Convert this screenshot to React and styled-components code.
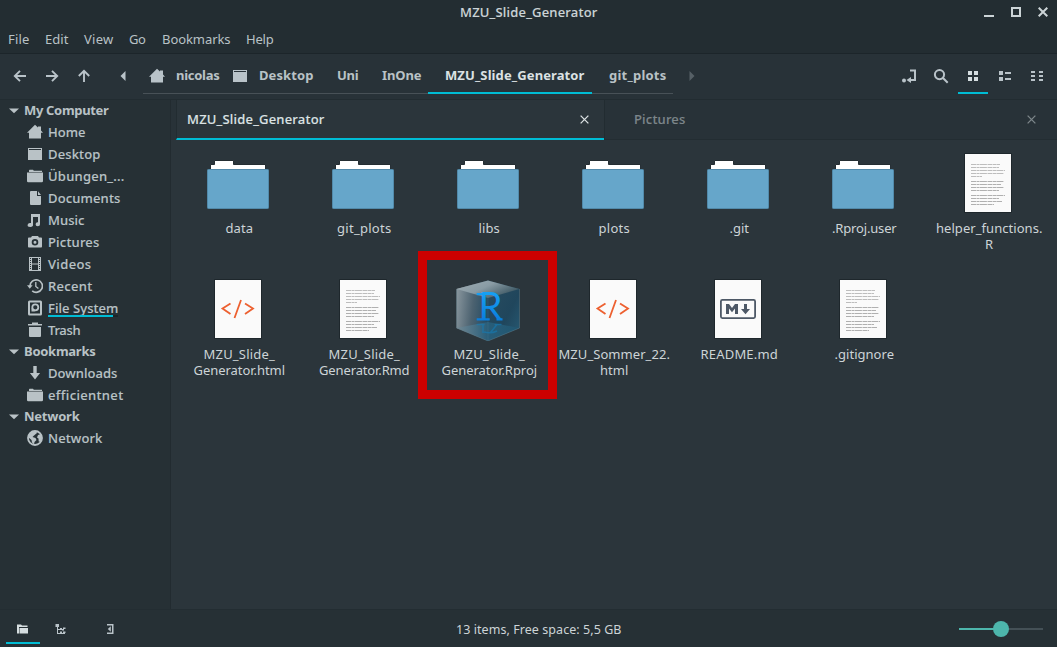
import React, { useLayoutEffect, useRef } from "react";
import styled, { createGlobalStyle } from "styled-components";

const c = {
  title: "#232d32",
  bar: "#283238",
  side: "#263035",
  view: "#2b353b",
  text: "#b9c2c6",
  bright: "#dce2e4",
  dim: "#7d868a",
  icon: "#b9c3c9",
  accent: "#00bcd4",
};

const Global = createGlobalStyle`
  *, *::before, *::after { box-sizing: border-box; }
  body { margin: 0; background: ${c.view}; font-family: "Noto Sans", "Open Sans", sans-serif; font-size: 13px; color: ${c.text}; overflow: hidden; }
  svg { display: block; flex: none; }
`;

const TextBox = styled.span`
  display: block;
  flex: none;
  width: ${(p) => p.$w}px;
  white-space: nowrap;
  font-size: ${(p) => p.$size || 13}px;
  font-weight: ${(p) => p.$weight || 400};
  -webkit-text-stroke: ${(p) => (p.$weight === 500 ? 0.12 : 0)}px currentColor;
  line-height: 16px;
`;

/* Tracks a label evenly so that it takes the given width. */
function Label({ w, size, weight, children }) {
  const ref = useRef(null);
  useLayoutEffect(() => {
    const el = ref.current;
    el.style.letterSpacing = "0px";
    const natural = el.getBoundingClientRect().width;
    el.style.letterSpacing = (w + 0.5 - natural) / Math.max(1, children.length) + "px";
  }, [w, children]);
  return (
    <TextBox $w={w} $size={size} $weight={weight}>
      <span ref={ref}>{children}</span>
    </TextBox>
  );
}

const Window = styled.div`
  width: 1057px;
  height: 647px;
  display: flex;
  flex-direction: column;
  background: ${c.view};
`;

const TitleBar = styled.header`
  height: 25px;
  padding-bottom: 1px;
  background: ${c.title};
  display: grid;
  grid-template-columns: 1fr auto 1fr;
  align-items: center;
  color: #ccd4d7;
`;
const WindowButtons = styled.div`
  display: flex;
  justify-content: flex-end;
  gap: 17px;
  padding-right: 9px;
`;

const MenuBar = styled.nav`
  height: 29px;
  background: ${c.title};
  border-bottom: 1px solid #1c252a;
  display: flex;
  align-items: center;
  padding-left: 8px;
`;
const MenuItem = styled.div`
  width: ${(p) => p.$cell}px;
`;

const Toolbar = styled.div`
  height: 46px;
  background: ${c.bar};
  border-bottom: 1px solid #222c31;
  display: flex;
  align-items: flex-start;
  padding-left: 12px;
  padding-right: 5px;
`;
const ToolButton = styled.div`
  width: ${(p) => p.$w}px;
  height: 40px;
  padding-top: 5px;
  display: flex;
  align-items: center;
  justify-content: center;
  border-bottom: 2px solid ${(p) => (p.$active ? c.accent : "transparent")};
  color: ${(p) => (p.$active ? "#d5dde0" : p.$faded ? "#566066" : c.icon)};
`;
const ScrollBack = styled(ToolButton)`
  justify-content: flex-start;
  padding-left: 23px;
`;
const Path = styled.div`
  display: flex;
`;
const Crumb = styled.div`
  width: ${(p) => p.$cell}px;
  height: 40px;
  padding: 4px 0 ${(p) => (p.$active ? 0 : 1)}px ${(p) => p.$pad}px;
  display: flex;
  align-items: center;
  border-bottom: ${(p) => (p.$active ? `2px solid ${c.accent}` : "1px solid #485157")};
  color: ${(p) => (p.$active ? c.bright : c.text)};
`;
const IconSlot = styled.span`
  width: ${(p) => p.$w}px;
  padding-top: 1px;
  color: ${c.icon};
`;
const Spacer = styled.div`
  flex: 1;
`;
const ViewButtons = styled.div`
  display: flex;
  gap: 2px;
`;

const Main = styled.div`
  height: 509px;
  display: flex;
`;
const Sidebar = styled.aside`
  width: 171px;
  background: ${c.side};
  border-right: 1px solid #222b30;
`;
const Heading = styled.div`
  height: 21px;
  display: flex;
  align-items: center;
  padding: 0 0 1px 9px;
  gap: 5px;
`;
const Place = styled.div`
  height: 22px;
  display: flex;
  align-items: center;
  padding-left: 27px;
  gap: 5px;
  color: ${c.text};
`;
const PlaceText = styled.div`
  position: relative;
`;
const Usage = styled.div`
  position: absolute;
  left: 0;
  right: 0;
  bottom: -1px;
  height: 2px;
  background: linear-gradient(to right, ${c.accent} 93%, #1c2529 93%);
`;

const Content = styled.main`
  flex: 1;
  background: ${c.view};
`;
const Tabs = styled.div`
  height: 40px;
  display: flex;
  background: ${c.bar};
  padding-left: 5px;
`;
const Tab = styled.div`
  width: ${(p) => p.$cell}px;
  display: flex;
  align-items: center;
  justify-content: space-between;
  padding: ${(p) => (p.$active ? "0 15px 0 10px" : "0 21px 1px 29px")};
  background: ${(p) => (p.$active ? c.view : c.bar)};
  border-left: 1px solid #222c31;
  border-bottom: ${(p) => (p.$active ? `2px solid ${c.accent}` : "1px solid #232d32")};
  color: ${(p) => (p.$active ? c.bright : c.dim)};
`;

const Files = styled.div`
  display: grid;
  grid-template-columns: repeat(7, 125px);
  grid-auto-rows: 126px;
  padding: 11px 0 0 5px;
`;
const File = styled.div`
  position: relative;
  display: flex;
  flex-direction: column;
  align-items: center;
`;
const FileIcon = styled.div`
  width: 64px;
  height: 64px;
  margin-bottom: 5px;
  margin-right: 1px;
`;
const FileName = styled.div`
  display: flex;
  flex-direction: column;
  align-items: center;
  padding-left: 1px;
  color: #cdd4d7;
`;
const Marker = styled.div`
  position: absolute;
  left: -8px;
  top: -26px;
  width: 139px;
  height: 148px;
  border: 9px solid #cc0000;
`;

const StatusBar = styled.footer`
  height: 38px;
  background: ${c.side};
  border-top: 1px solid #232d32;
  display: grid;
  grid-template-columns: 456px 1fr auto;
  align-items: center;
  color: #cdd4d7;
`;
const StatusText = styled.div`
  padding-top: 2px;
`;
const PaneButtons = styled.div`
  display: flex;
  align-self: start;
  padding-left: 6px;
`;
const PaneButton = styled.div`
  width: ${(p) => p.$w}px;
  margin-right: ${(p) => p.$gap}px;
  height: 34px;
  padding-top: 5px;
  display: flex;
  justify-content: center;
  align-items: center;
  color: ${(p) => (p.$active ? "#d5dde0" : c.icon)};
  border-bottom: 2px solid ${(p) => (p.$active ? c.accent : "transparent")};
`;
const Slider = styled.div`
  width: 84px;
  height: 2px;
  margin: 0 14px 0 0;
  display: flex;
  align-items: center;
  background: linear-gradient(to right, #4db6ac 50%, #445056 50%);
`;
const Knob = styled.div`
  width: 16px;
  height: 16px;
  flex: none;
  margin-left: 34px;
  border-radius: 50%;
  background: #4db6ac;
`;

const S = { fill: "none", stroke: "currentColor", strokeWidth: 2 };
const shapes = {
  home: <path d="M8 .8 11 3.6V2.5h3v4L16 8.8H14V14.5H2V8.8H0Z" />,
  desktop: <path d="M1 2h14v1H1zM1 4h14v10H1zM1 2h1v3H1zM14 2h1v3h-1z" />,
  folder: <path d="M2 2.5Q2 1.8 2.7 1.8H6l.8 1H15v1.2H2zM0 4.5h16V13q0 1.2-1.2 1.2H1.2Q0 14.2 0 13z" />,
  file: <path d="M4 1h6v5h4v8q0 1-1 1H4q-1 0-1-1V2q0-1 1-1zM11 1.2 14 5h-3z" />,
  music: <path d="M4 2h9v10.2A2.2 2 0 1 1 11 10.3V5H6v7.8A2.7 2 0 1 1 4 11Z" />,
  camera: <path fillRule="evenodd" d="M5 2h6l1 1.6h2.2q.8 0 .8.8v8.2q0 .9-.8.9H1.8q-.8 0-.8-.9V4.4q0-.8.8-.8H4zM8 5a3.3 3.3 0 1 0 0 6.6A3.3 3.3 0 0 0 8 5zM8 6.8a1.5 1.5 0 1 1 0 3 1.5 1.5 0 0 1 0-3z" />,
  film: (
    <path
      fillRule="evenodd"
      d="M2 1h12v14H2zM5 2v5.500h6V2zM5 8.500V14h6V8.500zM3 2v1h1V2zM3 4v1h1V4zM3 6v1h1V6zM3 8v1h1V8zM3 10v1h1v-1zM3 12v1h1v-1zM12 2v1h1V2zM12 4v1h1V4zM12 6v1h1V6zM12 8v1h1V8zM12 10v1h1v-1zM12 12v1h1v-1z"
    />
  ),
  recent: (
    <>
      <path {...S} strokeWidth="1.7" d="M3 8.5V8a6.2 6.2 0 1 1 2.2 4.8" />
      <path d="M0 7.300h5.600L2.800 10.800z" />
      <path {...S} strokeWidth="1.3" d="M8.800 4v4.400l2.600 2.200" />
    </>
  ),
  disk: (
    <>
      <rect {...S} x="2" y="1.5" width="12" height="13" rx=".5" />
      <circle {...S} cx="8.3" cy="7.3" r="3" strokeWidth="1.8" />
      <path d="M4.500 8 8 11.500H4.500z" />
    </>
  ),
  trash: <path d="M5 .5h6V2h4v1.500H1V2h4zM2 5h12v9q0 1-1 1H3q-1 0-1-1z" />,
  download: <path d="M6.3 1h3.400v7h3.400L8 14.500 2.900 8h3.400z" />,
  globe: (
    <>
      <circle {...S} cx="8" cy="8" r="7" strokeWidth="1.8" />
      <path d="M1.500 5 5 1.500 9 1 10 3 7 5.500 5.500 7l3 1 1 2-2 2-.5 2.500L5 12.500 4.500 10 1.500 7.500zM11 5l3-1 1.200 4-1.500 4-2-.5-.2-3-1.500-1z" />
    </>
  ),
  expander: <path d="M0 6.500h10L5 11.300z" />,
  left: <path {...S} strokeWidth="1.9" d="M14 8H3.500M8 2.800 2.800 8 8 13.200" />,
  right: <path {...S} strokeWidth="1.9" d="M2 8h10.500M8 2.800 13.200 8 8 13.200" />,
  up: <path {...S} strokeWidth="1.9" d="M8 14V3.500M2.800 8 8 2.800 13.200 8" />,
  triLeft: <path d="M10.500 3v10L5.500 8z" />,
  triRight: <path d="M5.500 3v10l5-5z" />,
  location: (
    <>
      <circle cx="3" cy="12.500" r="2" />
      <path {...S} d="M9 2.500h5V12H9" />
      <path d="M10 9v6l-4.500-3z" />
    </>
  ),
  search: <path {...S} d="M6.500 2a4.600 4.600 0 1 1 0 9.200 4.600 4.600 0 0 1 0-9.200zM10 10l4.700 4.700" />,
  grid: <path d="M3 3h4v4H3zM9 3h4v4H9zM3 9h4v4H3zM9 9h4v4H9z" />,
  list: <path d="M2 3h4v4H2zM2 9h4v4H2zM8 4h6v2H8zM8 10h6v2H8z" />,
  compact: <path d="M2 3h4v2H2zM2 7h4v2H2zM2 11h4v2H2zM10 3h4v2h-4zM10 7h4v2h-4zM10 11h4v2h-4z" />,
  places: <path d="M2 3.500h4l1 1h5.500V6H4v6.500H2zM5 7h8v5.500H4.500V7z" />,
  tree: <path d="M2.500 3h3.500v3H5v2h2V7h2v2H5v3h2v-1.500h2V12h3v1H4V6H2.500zM10 6.500h2.500V8H10zM9 8h2v1.500H9zM10 10.500h2.500V12H10z" />,
  hide: <path fillRule="evenodd" d="M5 3h6.500v10H5v-1.500h5v-7H5zM8.800 5.300v5.400L5.800 8z" />,
};

const Icon = ({ name, w = 16, view = "0 0 16 16" }) => (
  <svg width={w} height={16} viewBox={view} fill="currentColor">
    {shapes[name]}
  </svg>
);

const Close = ({ size = 9, stroke = 1.3 }) => (
  <svg width={size} height={size} viewBox="0 0 10 10" fill="none" stroke="currentColor" strokeWidth={(stroke * 10) / size}>
    <path d="M.7.7l8.600 8.600M9.300.7.7 9.300" />
  </svg>
);

const Folder = () => (
  <svg width="64" height="64" viewBox="0 0 64 64">
    <path d="M4.500 19v-5.500h4V9.500h19v4h31.500V19z" fill="#fff" stroke="#242d32" strokeWidth="1" />
    <path d="M5 19v-5h4v-4h18v4h32v5z" fill="#fff" />
    <rect x="1.500" y="18.500" width="61" height="39" rx=".8" fill="#66a6ca" stroke="#528aaa" />
  </svg>
);

const Sheet = ({ children }) => (
  <svg width="64" height="64" viewBox="0 0 64 64">
    <rect x="8" y="2" width="48" height="60" rx="1" fill="#1e272c" />
    <rect x="9" y="3" width="46" height="58" fill="#fafafa" />
    {children}
  </svg>
);

const lines = [
  [13, 29], [16, 28], [19, 34], [22, 33], [25, 11],
  [30, 33], [33, 30], [36, 33], [39, 28],
  [44, 34], [47, 28], [50, 31], [53, 23],
];
const TextSheet = () => (
  <Sheet>
    {lines.map(([y, w], i) => (
      <path key={y} d={`M15 ${y + 0.5}h${w}`} stroke={i < 5 ? "#bdbdbd" : "#b0b0b0"} strokeDasharray="5 .5 3 .4 7 .6" />
    ))}
  </Sheet>
);
const HtmlSheet = () => (
  <Sheet>
    <path d="M24.500 26.500 16.500 31.500l8 5.500M39 26.500l8 5-8 5.500M35 23l-6.500 18" fill="none" stroke="#ed6030" strokeWidth="1.8" />
  </Sheet>
);
const MdSheet = () => (
  <Sheet>
    <rect x="14.900" y="22.900" width="34.200" height="18.200" rx="1.5" fill="none" stroke="#4d5866" strokeWidth="1.8" />
    <path d="M20 37V27h3l3 4 3-4h3v10h-3v-5.500l-3 3.700-3-3.700V37zM38 27h3v5h3l-4.500 5.300L35 32h3z" fill="#4d5866" />
  </Sheet>
);

const SlabSerifs = () => (
  <path d="M20.700 16h7v2.200h-7zM20.700 41.200h13v2.200h-13zM40.500 41.200h6v2.200h-6z" />
);

const Cube = () => (
  <svg width="64" height="64" viewBox="0 0 64 64">
    <defs>
      <linearGradient id="cl" x1="0" x2="1" y1=".4" y2=".6">
        <stop offset="0" stopColor="#84929a" />
        <stop offset=".5" stopColor="#4c6270" />
        <stop offset="1" stopColor="#234a62" />
      </linearGradient>
      <linearGradient id="cr" x1="0" x2="1" y1="0" y2="1">
        <stop offset="0" stopColor="#294c60" />
        <stop offset=".6" stopColor="#20465c" />
        <stop offset="1" stopColor="#275b75" />
      </linearGradient>
      <linearGradient id="ct" x1="0" x2="1" y1="0" y2=".6">
        <stop offset="0" stopColor="#a0adb3" />
        <stop offset=".5" stopColor="#899ba4" />
        <stop offset="1" stopColor="#38535f" />
      </linearGradient>
      <linearGradient id="cb" x1="0" x2="1">
        <stop offset="0" stopColor="#728893" />
        <stop offset=".5" stopColor="#285d79" />
        <stop offset="1" stopColor="#215670" />
      </linearGradient>
      <linearGradient id="cR" gradientUnits="userSpaceOnUse" x1="0" x2="0" y1="16" y2="43">
        <stop offset="0" stopColor="#16a0f4" />
        <stop offset="1" stopColor="#0a7ddc" />
      </linearGradient>
    </defs>
    <path d="M.5 12 32 3.500V64L.5 51z" fill="url(#cl)" />
    <path d="M63.500 12 32 3.500V64l31.500-13z" fill="url(#cr)" />
    <path d="M.5 12 32 3.500 63.500 12 32 21z" fill="url(#ct)" />
    <path d="M.5 51 32 45l31.500 6L32 64z" fill="url(#cb)" />
    <path d="M.5 12v39L32 64 63.500 51V12" fill="none" stroke="#64818e" strokeWidth=".6" opacity=".7" />
    <path d="M32 21v43" stroke="#6a8999" strokeWidth=".5" opacity=".4" />
    <g fill="url(#cR)">
      <text x="22.500" y="43.400" fontFamily="Lato, sans-serif" fontSize="38" textLength="24" lengthAdjust="spacingAndGlyphs">R</text>
      <SlabSerifs />
    </g>
    <path d="M20.700 47.500h8M38.500 47.500h7M27 47v9M34 56l7-8.500M28 55q7 2 13-1" fill="none" stroke="#147bb5" strokeWidth="1.5" opacity=".6" />
  </svg>
);

const menu = [["File", 37, 21], ["Edit", 39, 23], ["View", 45, 29], ["Go", 33, 16], ["Bookmarks", 84, 68], ["Help", 40, 27]];

const crumbs = [
  { t: "nicolas", cell: 83, pad: 6, w: 43, icon: "home", slot: 27 },
  { t: "Desktop", cell: 95, pad: 6, w: 54, icon: "desktop", slot: 27 },
  { t: "Uni", cell: 45, pad: 16, w: 21 },
  { t: "InOne", cell: 62, pad: 16, w: 39 },
  { t: "MZU_Slide_Generator", cell: 164, pad: 17, w: 139, active: true },
  { t: "git_plots", cell: 81, pad: 17, w: 57 },
];

const groups = [
  ["My Computer", 84, [
    ["home", "Home", 37], ["desktop", "Desktop", 52], ["folder", "Übungen_...", 76], ["file", "Documents", 72],
    ["music", "Music", 36], ["camera", "Pictures", 51], ["film", "Videos", 43], ["recent", "Recent", 44],
    ["disk", "File System", 70], ["trash", "Trash", 32],
  ]],
  ["Bookmarks", 71, [["download", "Downloads", 69], ["folder", "efficientnet", 75]]],
  ["Network", 55, [["globe", "Network", 54]]],
];

const files = [
  [Folder, [["data", 27]]],
  [Folder, [["git_plots", 54]]],
  [Folder, [["libs", 21]]],
  [Folder, [["plots", 31]]],
  [Folder, [[".git", 19]]],
  [Folder, [[".Rproj.user", 64]]],
  [TextSheet, [["helper_functions.", 106], ["R", 8]]],
  [HtmlSheet, [["MZU_Slide_", 71], ["Generator.html", 91]]],
  [TextSheet, [["MZU_Slide_", 71], ["Generator.Rmd", 90]]],
  [Cube, [["MZU_Slide_", 71], ["Generator.Rproj", 95]], true],
  [HtmlSheet, [["MZU_Sommer_22.", 111], ["html", 28]]],
  [MdSheet, [["README.md", 77]]],
  [TextSheet, [[".gitignore", 59]]],
];

export default function App() {
  return (
    <Window>
      <Global />
      <TitleBar>
        <span />
        <Label w={137} weight={500}>MZU_Slide_Generator</Label>
        <WindowButtons>
          <svg width="10" height="10" viewBox="0 0 10 10" fill="currentColor"><path d="M0 8h10v2H0z" /></svg>
          <svg width="10" height="10" viewBox="0 0 10 10" {...S}><path d="M1 1h8v8H1z" /></svg>
          <Close size={10} stroke={2} />
        </WindowButtons>
      </TitleBar>
      <MenuBar>
        {menu.map(([t, cell, w]) => (
          <MenuItem key={t} $cell={cell}><Label w={w}>{t}</Label></MenuItem>
        ))}
      </MenuBar>
      <Toolbar>
        <ToolButton $w={16}><Icon name="left" /></ToolButton>
        <ToolButton $w={48}><Icon name="right" /></ToolButton>
        <ToolButton $w={16}><Icon name="up" /></ToolButton>
        <ScrollBack $w={51}><Icon name="triLeft" /></ScrollBack>
        <Path>
          {crumbs.map((b) => (
            <Crumb key={b.t} $cell={b.cell} $pad={b.pad} $active={b.active}>
              {b.icon && <IconSlot $w={b.slot}><Icon name={b.icon} /></IconSlot>}
              <Label w={b.w} weight={700}>{b.t}</Label>
            </Crumb>
          ))}
        </Path>
        <ToolButton $w={38} $faded><Icon name="triRight" /></ToolButton>
        <Spacer />
        <ViewButtons>
          <ToolButton $w={30}><Icon name="location" /></ToolButton>
          <ToolButton $w={30}><Icon name="search" /></ToolButton>
          <ToolButton $w={30} $active><Icon name="grid" /></ToolButton>
          <ToolButton $w={30}><Icon name="list" /></ToolButton>
          <ToolButton $w={30}><Icon name="compact" /></ToolButton>
        </ViewButtons>
      </Toolbar>
      <Main>
        <Sidebar>
          {groups.map(([title, w, places]) => (
            <React.Fragment key={title}>
              <Heading>
                <Icon name="expander" w={10} view="0 0 10 16" />
                <Label w={w} weight={700}>{title}</Label>
              </Heading>
              {places.map(([icon, t, pw]) => (
                <Place key={t}>
                  <Icon name={icon} />
                  <PlaceText>
                    <Label w={pw} weight={500}>{t}</Label>
                    {icon === "disk" && <Usage />}
                  </PlaceText>
                </Place>
              ))}
            </React.Fragment>
          ))}
        </Sidebar>
        <Content>
          <Tabs>
            <Tab $cell={428} $active><Label w={137} weight={500}>MZU_Slide_Generator</Label><Close /></Tab>
            <Tab $cell={453}><Label w={51} weight={500}>Pictures</Label><Close /></Tab>
          </Tabs>
          <Files>
            {files.map(([Art, names, marked], i) => (
              <File key={i}>
                <FileIcon><Art /></FileIcon>
                <FileName>
                  {names.map(([t, w]) => <Label key={t} w={w}>{t}</Label>)}
                </FileName>
                {marked && <Marker />}
              </File>
            ))}
          </Files>
        </Content>
      </Main>
      <StatusBar>
        <PaneButtons>
          <PaneButton $w={34} $gap={4} $active><Icon name="places" /></PaneButton>
          <PaneButton $w={34} $gap={15}><Icon name="tree" /></PaneButton>
          <PaneButton $w={34} $gap={0}><Icon name="hide" /></PaneButton>
        </PaneButtons>
        <StatusText><Label w={165} size={12.5}>13 items, Free space: 5,5 GB</Label></StatusText>
        <Slider><Knob /></Slider>
      </StatusBar>
    </Window>
  );
}
